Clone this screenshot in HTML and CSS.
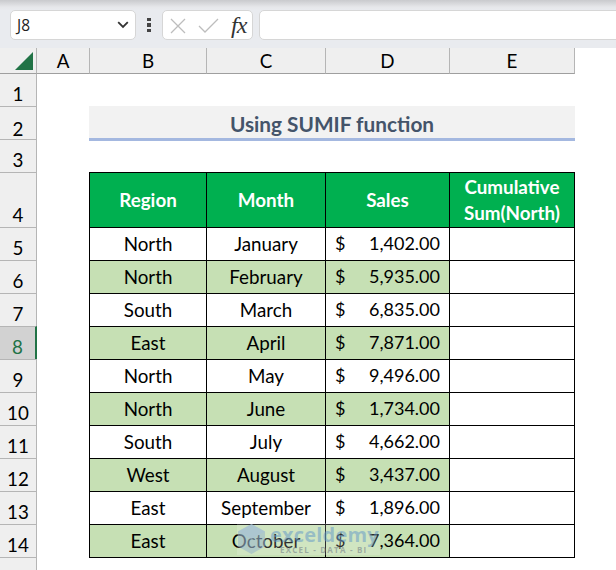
FILE: index.html
```html
<!DOCTYPE html>
<html lang="en">
<head>
<meta charset="utf-8">
<title>Using SUMIF function</title>
<link rel="stylesheet" href="styles.css">
</head>
<body>
<div class="app">
  <div class="formulabar">
    <div class="namebox"><span>J8</span>
      <svg class="chev" width="12" height="8" viewBox="0 0 12 8"><path d="M1.200 1.200 6 6l4.800-4.800" fill="none" stroke="#333" stroke-width="1.800"/></svg>
    </div>
    <div class="dots"><i></i><i></i><i></i></div>
    <div class="fxbox">
      <svg width="16" height="16" viewBox="0 0 16 16"><path d="M1 1l14 14M15 1 1 15" fill="none" stroke="#bdbdbd" stroke-width="1.300"/></svg>
      <svg width="21" height="16" viewBox="0 0 21 16"><path d="M1 8l6 6L20 1" fill="none" stroke="#bdbdbd" stroke-width="1.300"/></svg>
      <span class="fx">fx</span>
    </div>
    <div class="input"></div>
  </div>
  <div class="sheet">
    <div class="row colheads">
      <div class="corner"><svg width="18" height="18" viewBox="0 0 18 18"><path d="M18 0V18H0Z" fill="#217346"/></svg></div>
      <div class="ch">A</div><div class="ch line">B</div><div class="ch line">C</div><div class="ch line">D</div><div class="ch line last">E</div>
    </div>
    <div class="row r1"><div class="rh first">1</div></div>
    <div class="row"><div class="rh">2</div><div class="title">Using SUMIF function</div></div>
    <div class="row"><div class="rh">3</div></div>
    <div class="row r4 header">
      <div class="rh">4</div><div></div>
      <div class="c">Region</div><div class="c">Month</div><div class="c">Sales</div><div class="c last">Cumulative<br>Sum(North)</div>
    </div>
    <div class="row"><div class="rh">5</div><div></div><div class="c">North</div><div class="c">January</div><div class="c money"><span>$</span><span>1,402.00</span></div><div class="c last"></div></div>
    <div class="row alt"><div class="rh">6</div><div></div><div class="c">North</div><div class="c">February</div><div class="c money"><span>$</span><span>5,935.00</span></div><div class="c last"></div></div>
    <div class="row"><div class="rh">7</div><div></div><div class="c">South</div><div class="c">March</div><div class="c money"><span>$</span><span>6,835.00</span></div><div class="c last"></div></div>
    <div class="row alt"><div class="rh sel">8</div><div></div><div class="c">East</div><div class="c">April</div><div class="c money"><span>$</span><span>7,871.00</span></div><div class="c last"></div></div>
    <div class="row"><div class="rh">9</div><div></div><div class="c">North</div><div class="c">May</div><div class="c money"><span>$</span><span>9,496.00</span></div><div class="c last"></div></div>
    <div class="row alt"><div class="rh">10</div><div></div><div class="c">North</div><div class="c">June</div><div class="c money"><span>$</span><span>1,734.00</span></div><div class="c last"></div></div>
    <div class="row"><div class="rh">11</div><div></div><div class="c">South</div><div class="c">July</div><div class="c money"><span>$</span><span>4,662.00</span></div><div class="c last"></div></div>
    <div class="row alt"><div class="rh">12</div><div></div><div class="c">West</div><div class="c">August</div><div class="c money"><span>$</span><span>3,437.00</span></div><div class="c last"></div></div>
    <div class="row"><div class="rh">13</div><div></div><div class="c">East</div><div class="c">September</div><div class="c money"><span>$</span><span>1,896.00</span></div><div class="c last"></div></div>
    <div class="row alt"><div class="rh">14</div><div></div><div class="c">East</div><div class="c">October</div><div class="c money"><span>$</span><span>7,364.00</span></div><div class="c last"></div></div>
    <div class="row end"><div class="rh"></div><div></div><div class="c"></div><div class="c"></div><div class="c"></div><div class="c last"></div></div>
    <div class="watermark">
      <svg class="wm-logo" width="29" height="30" viewBox="0 0 29 30"><path d="M14.500 0 28 7.500v15L14.500 30 1 22.500v-15Z" fill="#8fb0cc" opacity=".5"/><path d="M14.500 0 28 7.500 14.500 15 1 7.500Z" fill="#a9c3d9" opacity=".55"/></svg>
      <div class="wm-text"><div class="wm-name">exceldemy</div><div class="wm-sub">EXCEL - DATA - BI</div></div>
    </div>
  </div>
</div>
</body>
</html>
```
FILE: styles.css
```css
* { box-sizing: border-box; }
html, body { margin: 0; height: 100%; overflow: hidden; background: #fff; }
.app { width: 616px; height: 570px; overflow: hidden; font-family: "Lato", "Liberation Sans", sans-serif; color: #000; }

.formulabar {
  height: 48px;
  display: flex;
  align-items: flex-start;
  padding: 10px 0 0 10px;
  background: linear-gradient(#c9cacd 0, #e6e7ea 7px, #e9ebef 10px);
}
.namebox, .fxbox, .input {
  height: 30px;
  background: #fff;
  border: 1px solid #d6d6d6;
  border-radius: 5px;
}
.namebox {
  width: 126px;
  display: flex;
  align-items: center;
  justify-content: space-between;
  padding: 0 6px 0 6px;
  font: 15.500px "Open Sans", sans-serif;
  color: #222;
}
.dots { width: 26px; height: 30px; display: flex; flex-direction: column; align-items: center; justify-content: center; gap: 2px; }
.dots i { width: 4px; height: 3.500px; background: #444; }
.fxbox { width: 91px; display: flex; align-items: center; padding: 1px 0 0 7px; gap: 12px; }
.fx { font: italic 24px "Liberation Serif", serif; color: #333; margin-left: 0; letter-spacing: -1px; }
.input { flex: 1; margin-left: 6px; margin-right: -6px; }

.sheet { position: relative; }
.row {
  display: grid;
  grid-template-columns: 37px 52px 117px 119px 124px 126px;
  height: 33px;
  font-size: 18.800px;
}
.colheads { height: 26px; }
.r1 { height: 32px; }
.r4 { height: 55px; }
.end { height: 13px; }

.corner { background: #efefef; border-right: 1px solid #b5b5b5; border-bottom: 1px solid #9f9f9f; display: flex; justify-content: flex-end; align-items: flex-end; padding: 0 3px 3px 0; }
.ch { background: #efefef; border-bottom: 1px solid #9f9f9f; display: flex; align-items: center; justify-content: center; }
.ch.line { border-left: 1px solid #b5b5b5; }
.ch.last { border-right: 1px solid #b5b5b5; }

.rh {
  background: #efefef;
  border-right: 1px solid #b5b5b5;
  border-top: 1px solid #b5b5b5;
  display: flex;
  align-items: flex-end;
  justify-content: center;
  padding-bottom: 1px;
  line-height: 22px;
}
.rh.first { border-top: 0; }
.rh.sel { background: #d2d2d2; color: #217346; border-right: 2px solid #217346; }

.title {
  grid-column: 3 / 7;
  height: 35px;
  padding-top: 2px;
  background: #f2f2f2;
  border-bottom: 3px solid #a4b8e0;
  display: flex;
  align-items: center;
  justify-content: center;
  font-weight: 700;
  font-size: 20.800px;
  color: #44546a;
}

.c {
  border-top: 1px solid #000;
  border-left: 1px solid #000;
  padding-bottom: 2px;
  display: flex;
  align-items: center;
  justify-content: center;
  text-align: center;
}
.c.last { border-right: 1px solid #000; }
.alt .c:not(.last) { background: #c6e0b4; }
.header .c { background: #00b050; color: #fff; font-weight: 700; line-height: 26px; padding-bottom: 0; }
.money { justify-content: space-between; padding: 0 9px 2px; font-size: 18px; }
.end .c { border-left: 0; border-right: 0; background: none; }

.watermark {
  position: absolute;
  left: 237px;
  top: 475px;
  width: 143px;
  height: 32px;
  display: flex;
  align-items: center;
  gap: 4px;
  background: rgba(255,255,255,.18);
}
.wm-logo { flex: none; }
.wm-text { display: flex; flex-direction: column; line-height: 1; }
.wm-name { font: 700 20px "Open Sans", sans-serif; color: rgba(95,150,200,.5); line-height: 20px; letter-spacing: .2px; }
.wm-sub { font: 700 8px "Open Sans", sans-serif; color: rgba(110,120,130,.55); letter-spacing: 1.200px; line-height: 9px; margin-left: 10px; white-space: nowrap; }
```
